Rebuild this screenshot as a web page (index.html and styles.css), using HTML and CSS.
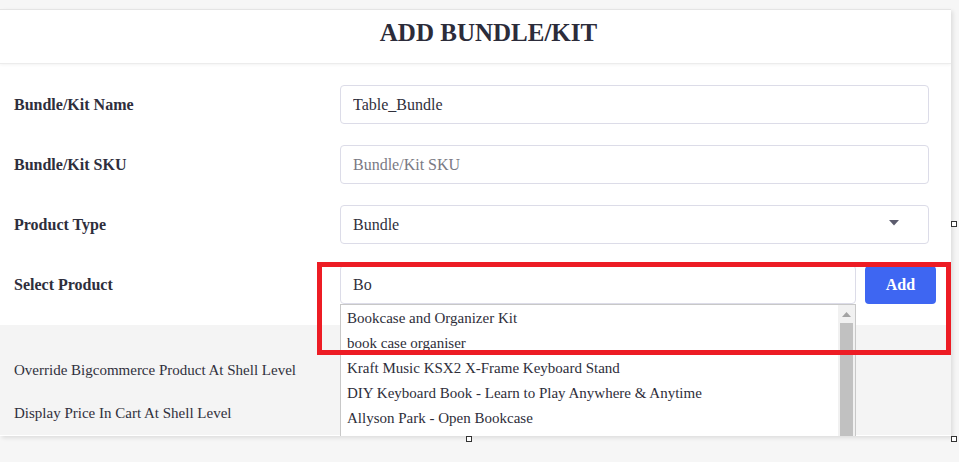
FILE: index.html
```html
<!DOCTYPE html>
<html>
<head>
<meta charset="utf-8">
<link rel="stylesheet" href="styles.css">
</head>
<body>
<div class="page">
  <div class="card">
    <header class="card-head"><h1>ADD BUNDLE/KIT</h1></header>
    <div class="form">
      <div class="row">
        <label class="lbl">Bundle/Kit Name</label>
        <input class="field" type="text" value="Table_Bundle">
      </div>
      <div class="row">
        <label class="lbl">Bundle/Kit SKU</label>
        <input class="field" type="text" placeholder="Bundle/Kit SKU">
      </div>
      <div class="row">
        <label class="lbl">Product Type</label>
        <div class="field select">
          <span>Bundle</span>
          <svg class="caret" width="10" height="6" viewBox="0 0 10 6"><path d="M0 0H10L5 5.5Z" fill="#5c5c6e"/></svg>
        </div>
      </div>
      <div class="row">
        <label class="lbl">Select Product</label>
        <div class="product">
          <div class="search">
            <input class="field" type="text" value="Bo">
            <div class="suggest">
              <ul class="items">
                <li>Bookcase and Organizer Kit</li>
                <li>book case organiser</li>
                <li>Kraft Music KSX2 X-Frame Keyboard Stand</li>
                <li>DIY Keyboard Book - Learn to Play Anywhere &amp; Anytime</li>
                <li>Allyson Park - Open Bookcase</li>
              </ul>
              <div class="sbar">
                <svg class="sbar-up" width="9" height="5" viewBox="0 0 9 5"><path d="M0 5H9L4.5 0Z" fill="#a3a3a3"/></svg>
                <div class="sbar-thumb"></div>
              </div>
            </div>
          </div>
          <button class="btn-add" type="button">Add</button>
        </div>
      </div>
    </div>
    <div class="options">
      <div class="opt">Override Bigcommerce Product At Shell Level</div>
      <div class="opt">Display Price In Cart At Shell Level</div>
    </div>
  </div>
  <div class="annot"></div>
  <span class="handle h-right"></span>
  <span class="handle h-corner"></span>
  <span class="handle h-bottom"></span>
</div>
</body>
</html>
```

FILE: styles.css
```css
* { box-sizing: border-box; }
html, body { margin: 0; padding: 0; }
body {
  background: #f6f6f6;
  font-family: "Liberation Serif", "Times New Roman", serif;
  color: #30303c;
  width: 959px;
  height: 462px;
  overflow: hidden;
}
.page {
  position: relative;
  padding-top: 9px;
  height: 462px;
}
.card {
  width: 951px;
  background: #fff;
  border-top: 1px solid #e4e4e4;
  box-shadow: 2px 2px 4px rgba(0,0,0,0.10);
  overflow: hidden;
  height: 427px;
}
.card-head {
  height: 54px;
  padding-top: 9px;
  border-bottom: 1px solid #ececec;
  box-shadow: 0 1px 3px rgba(0,0,0,0.05);
  position: relative;
  z-index: 1;
}
.card-head h1 {
  margin: 0;
  text-align: center;
  font-size: 25px;
  line-height: 28px;
  font-weight: bold;
  color: #2c2c3a;
  padding-left: 26px;
}
.form {
  display: flex;
  flex-direction: column;
  gap: 21px;
  padding: 21px 0 21px 14px;
}
.row {
  display: flex;
  align-items: center;
  height: 39px;
}
.lbl {
  width: 326px;
  font-size: 16px;
  font-weight: bold;
  color: #2e2e3c;
}
.field {
  width: 589px;
  height: 39px;
  border: 1px solid #dcdce8;
  border-radius: 4px;
  padding: 0 12px;
  font-family: "Liberation Serif", "Times New Roman", serif;
  font-size: 16px;
  color: #30303c;
  background: #fff;
  outline: none;
}
.field::placeholder { color: #7a7a84; }
.select {
  display: flex;
  align-items: center;
  justify-content: space-between;
  padding-right: 29px;
}
.caret { display: block; margin-top: -3px; }
.product {
  display: flex;
  gap: 9px;
  align-items: flex-start;
}
.search {
  position: relative;
  width: 516px;
}
.search .field { width: 516px; }
.suggest {
  position: absolute;
  left: 0;
  top: 39px;
  width: 516px;
  height: 160px;
  border: 1px solid #c8c8c8;
  background: #fff;
  z-index: 3;
}
.items {
  list-style: none;
  margin: 0;
  padding: 1px 0 0 6px;
}
.items li {
  font-size: 15px;
  line-height: 25px;
  color: #2e2e3a;
  white-space: nowrap;
}
.sbar {
  position: absolute;
  top: 0;
  right: 0;
  bottom: 0;
  width: 17px;
  background: #f1f1f1;
}
.sbar-up {
  position: absolute;
  left: 4px;
  top: 7px;
}
.sbar-thumb {
  position: absolute;
  left: 2px;
  top: 18px;
  width: 13px;
  bottom: 0;
  background: #c1c1c1;
}
.btn-add {
  width: 71px;
  height: 38px;
  margin-top: 1px;
  border: none;
  border-radius: 4px;
  background: #3e66f2;
  color: #fff;
  font-family: "Liberation Serif", "Times New Roman", serif;
  font-size: 16px;
  font-weight: bold;
  padding: 0;
}
.options {
  background: #f4f4f4;
  height: 110px;
  padding: 35px 0 0 14px;
  display: flex;
  flex-direction: column;
  gap: 23px;
}
.opt {
  font-size: 15px;
  line-height: 20px;
  color: #30303c;
}
.annot {
  position: absolute;
  left: 317px;
  top: 262px;
  width: 634px;
  height: 93px;
  border: 5px solid #ed1c24;
  z-index: 5;
  pointer-events: none;
}
.handle {
  position: absolute;
  width: 6px;
  height: 6px;
  border: 1px solid #333;
  background: #fff;
  z-index: 6;
}
.h-right { left: 951px; top: 221px; }
.h-corner { left: 951px; top: 436px; }
.h-bottom { left: 466px; top: 436px; }
```
